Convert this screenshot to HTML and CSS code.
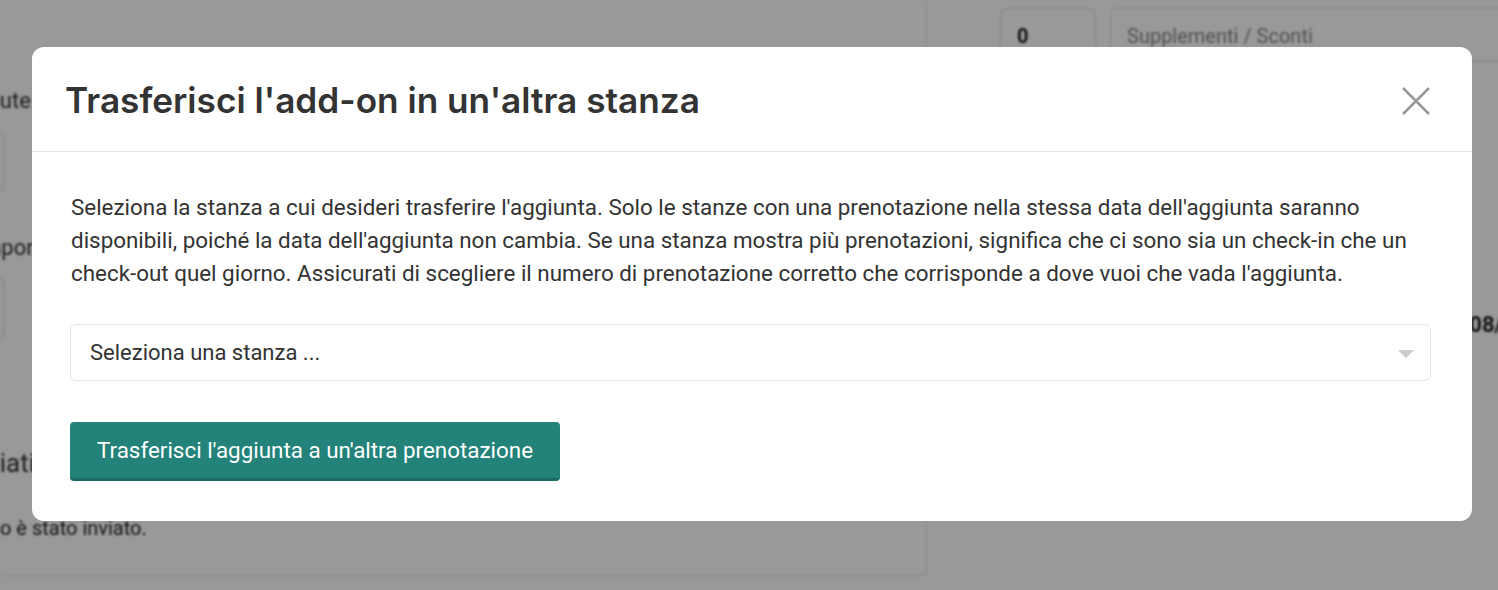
FILE: index.html
```html
<!DOCTYPE html>
<html lang="it">
<head>
<meta charset="utf-8">
<title>Trasferisci add-on</title>
<link rel="stylesheet" href="styles.css">
</head>
<body>
<div class="page">
  <div class="left-card">
    <div class="bg-label l1">Valute</div>
    <div class="bg-input"></div>
    <div class="bg-label l2">Importo</div>
    <div class="bg-input"></div>
    <div class="bg-label l3">Dati inviati</div>
    <div class="bg-text">o è stato inviato.</div>
  </div>
  <div class="right-col">
    <div class="bg-row">
      <div class="bg-box small">0</div>
      <div class="bg-box wide">Supplementi / Sconti</div>
    </div>
    <div class="bg-date">08/08</div>
  </div>
</div>

<div class="overlay">
  <div class="modal">
    <div class="modal-header">
      <h2 class="modal-title">Trasferisci l'add-on in un'altra stanza</h2>
      <button class="close" aria-label="Chiudi">
        <svg width="30" height="30" viewBox="0 0 30 30"><path d="M2 2 L28 28 M28 2 L2 28" stroke="#999" stroke-width="2.6" fill="none"/></svg>
      </button>
    </div>
    <div class="modal-body">
      <p class="desc">Seleziona la stanza a cui desideri trasferire l'aggiunta. Solo le stanze con una prenotazione nella stessa data dell'aggiunta saranno disponibili, poiché la data dell'aggiunta non cambia. Se una stanza mostra più prenotazioni, significa che ci sono sia un check-in che un check-out quel giorno. Assicurati di scegliere il numero di prenotazione corretto che corrisponde a dove vuoi che vada l'aggiunta.</p>
      <div class="select">
        <span>Seleziona una stanza ...</span>
        <span class="caret"></span>
      </div>
      <button class="btn">Trasferisci l'aggiunta a un'altra prenotazione</button>
    </div>
  </div>
</div>
</body>
</html>
```
FILE: styles.css
```css
* { box-sizing: border-box; }
html, body { margin: 0; padding: 0; }
body {
  width: 1498px;
  height: 590px;
  overflow: hidden;
  background: #fff;
  font-family: Roboto, "Liberation Sans", sans-serif;
}
.page {
  display: flex;
  height: 590px;
  filter: blur(1.2px);
}
.left-card {
  width: 927px;
  height: 576px;
  flex: none;
  border-right: 2px solid #eee;
  border-bottom: 2px solid #eee;
  display: flex;
  flex-direction: column;
  padding-top: 88px;
}
.bg-label {
  white-space: nowrap;
  font-size: 22px;
  color: #333;
}
.l1 { margin-left: -31px; }
.bg-input {
  height: 62px;
  border: 1px solid #ddd;
  border-radius: 4px;
  width: 80px;
  margin: 18px 0 0 -76px;
}
.l2 { margin-top: 42px; margin-left: -24px; }
.l3 { margin-top: 108px; font-size: 26px; margin-left: -86px; }
.bg-text { margin-top: 38px; font-size: 20px; color: #222; white-space: nowrap; }
.right-col {
  flex: 1;
  padding-left: 73px;
  padding-top: 8px;
  display: flex;
  flex-direction: column;
}
.bg-row { display: flex; gap: 14px; margin-right: -40px; }
.bg-box {
  height: 54px;
  border: 1px solid #ddd;
  border-radius: 6px;
  background: #fff;
  font-size: 20px;
  padding: 15px 16px;
  color: #555;
}
.bg-box.small { width: 96px; color: #222; font-weight: 700; }
.bg-box.wide { flex: 1; color: #888; }
.bg-date {
  align-self: flex-end;
  margin-right: -30px;
  margin-top: 250px;
  font-size: 22px;
  font-weight: 700;
  color: #222;
}

.overlay {
  position: fixed;
  inset: 0;
  background: rgba(0, 0, 0, 0.4);
  padding-top: 47px;
}
.modal {
  margin-left: 32px;
  width: 1440px;
  background: #fff;
  border-radius: 12px;
}
.modal-header {
  height: 105px;
  border-bottom: 1px solid #e6e6e6;
  display: flex;
  align-items: center;
  justify-content: space-between;
  padding: 2px 41px 0 33px;
}
.modal-title {
  margin: 0;
  font-family: Inter, "Noto Sans", sans-serif;
  font-weight: 600;
  font-size: 35.2px;
  color: #333;
}
.close {
  border: 0;
  background: none;
  padding: 0;
  width: 30px;
  height: 30px;
  display: flex;
  margin-top: 2px;
}
.modal-body {
  padding: 39px 41px 40px 38px;
}
.desc {
  margin: 0 0 34px 1px;
  font-size: 22.4px;
  line-height: 33px;
  color: #333;
}
.select {
  height: 57px;
  border: 1px solid #e6e6e6;
  border-radius: 6px;
  display: flex;
  align-items: center;
  justify-content: space-between;
  padding: 0 16px 0 19px;
  font-size: 22px;
  color: #333;
}
.caret {
  width: 0;
  height: 0;
  border-left: 8px solid transparent;
  border-right: 8px solid transparent;
  border-top: 8px solid #ccc;
  margin-top: 2px;
}
.btn {
  margin-top: 41px;
  height: 59px;
  padding: 0 27px;
  border: 0;
  border-bottom: 3px solid #1b6a62;
  border-radius: 4px;
  background: #238279;
  color: #fff;
  font-family: Roboto, "Liberation Sans", sans-serif;
  font-size: 22.4px;
}
```
